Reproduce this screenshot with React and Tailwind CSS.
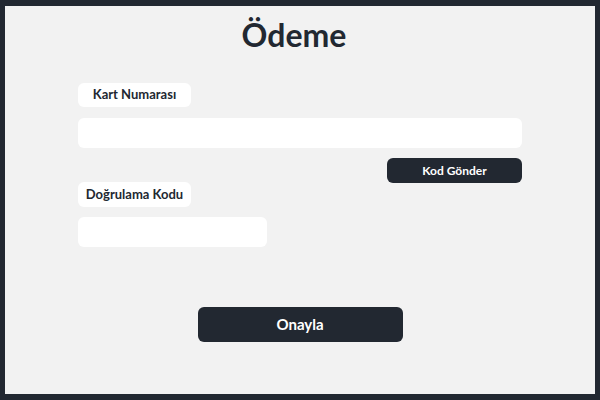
import React from 'react';

const App = () => {
  return (
    <div className="w-[600px] h-[400px] bg-[#222831] pt-[6px] px-[5px] pb-[6px] font-['Lato',sans-serif]">
      <div className="h-full bg-[#f2f2f2] flex flex-col">
        <h1 className="text-center text-[32px] font-bold text-[#222831] leading-none mt-[13px] ml-[-12px]">Ödeme</h1>

        <div className="flex flex-col pl-[73px] pr-[73px] mt-[32px]">
          <div className="w-[113px] h-[24px] bg-white rounded-md flex items-center justify-center text-[13px] font-bold text-[#222831]">
            Kart Numarası
          </div>
          <input className="mt-[11px] h-[30px] w-[444px] bg-white rounded-md outline-none" />
          <div className="flex justify-end mt-[10px]">
            <button className="w-[135px] h-[25px] bg-[#222831] rounded-md text-[12px] font-bold text-white">
              Kod Gönder
            </button>
          </div>
          <div className="w-[113px] h-[25px] bg-white rounded-md flex items-center justify-center text-[13px] font-bold text-[#222831] mt-[-1px]">
            Doğrulama Kodu
          </div>
          <input className="mt-[10px] h-[30px] w-[189px] bg-white rounded-md outline-none" />
        </div>

        <div className="flex justify-center mt-[60px]">
          <button className="w-[205px] h-[35px] bg-[#222831] rounded-md text-[15px] font-bold text-white">
            Onayla
          </button>
        </div>
      </div>
    </div>
  );
};

export default App;
